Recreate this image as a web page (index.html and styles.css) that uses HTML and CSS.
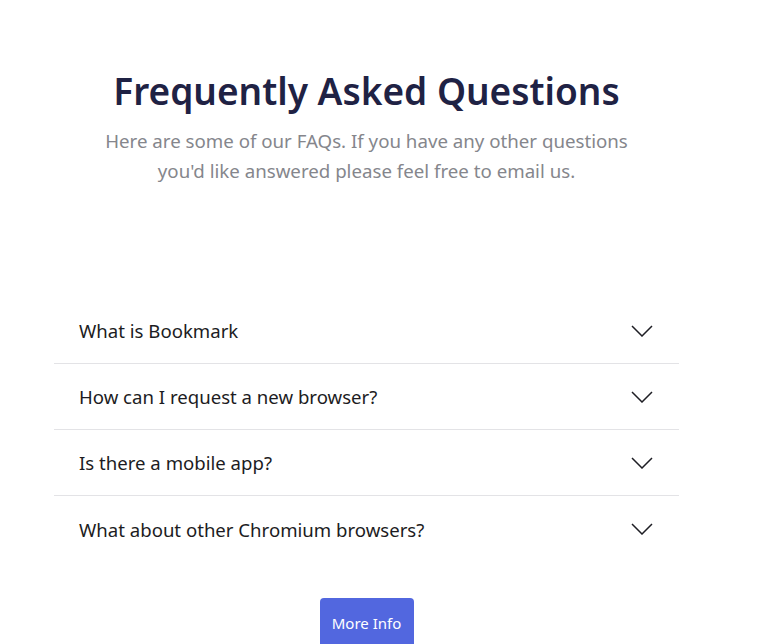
FILE: index.html
```html
<!DOCTYPE html>
<html lang="en">
<head>
<meta charset="utf-8">
<title>FAQ</title>
<link rel="stylesheet" href="styles.css">
</head>
<body>
<main class="faq">
  <header class="faq-header">
    <h1 class="faq-title">Frequently Asked Questions</h1>
    <p class="faq-sub">Here are some of our FAQs. If you have any other questions you'd like answered please feel free to email us.</p>
  </header>
  <ul class="faq-list">
    <li class="faq-item"><span>What is Bookmark</span><svg class="chev" width="22" height="12" viewBox="0 0 22 12"><path d="M1 1l10 10L21 1" fill="none" stroke="#1e1e24" stroke-width="1.5"/></svg></li>
    <li class="faq-item"><span>How can I request a new browser?</span><svg class="chev" width="22" height="12" viewBox="0 0 22 12"><path d="M1 1l10 10L21 1" fill="none" stroke="#1e1e24" stroke-width="1.5"/></svg></li>
    <li class="faq-item"><span>Is there a mobile app?</span><svg class="chev" width="22" height="12" viewBox="0 0 22 12"><path d="M1 1l10 10L21 1" fill="none" stroke="#1e1e24" stroke-width="1.5"/></svg></li>
    <li class="faq-item"><span>What about other Chromium browsers?</span><svg class="chev" width="22" height="12" viewBox="0 0 22 12"><path d="M1 1l10 10L21 1" fill="none" stroke="#1e1e24" stroke-width="1.5"/></svg></li>
  </ul>
  <div class="faq-actions">
    <button class="btn">More Info</button>
  </div>
</main>
</body>
</html>
```
FILE: styles.css
```css
* { box-sizing: border-box; }
body {
  margin: 0;
  background: #fff;
  font-family: "Noto Sans", "Open Sans", sans-serif;
  color: #242a45;
}
.faq {
  width: 625px;
  margin-left: 54px;
  padding-top: 66px;
}
.faq-header {
  display: flex;
  flex-direction: column;
  align-items: center;
  text-align: center;
}
.faq-title {
  margin: 0;
  font-size: 37px;
  line-height: 50px;
  font-weight: 600;
  color: #1f2244;
}
.faq-sub {
  margin: 10px 0 0;
  width: 540px;
  font-size: 18.7px;
  line-height: 30px;
  color: #85868c;
}
.faq-list {
  list-style: none;
  margin: 112px 0 0;
  padding: 0;
}
.faq-item {
  display: flex;
  align-items: center;
  justify-content: space-between;
  height: 66px;
  padding: 0 26px 0 25px;
  font-size: 18.6px;
  color: #1c1c22;
  border-bottom: 1px solid #e3e3e6;
}
.faq-item:last-child { border-bottom: none; }
.chev { display: block; }
.faq-actions {
  display: flex;
  justify-content: center;
  margin-top: 36px;
}
.btn {
  width: 94px;
  height: 50px;
  border: none;
  border-radius: 4px;
  background: #5267df;
  color: #fff;
  font-family: inherit;
  font-size: 15px;
  padding: 0;
  display: flex;
  justify-content: center;
  align-items: flex-start;
  padding-top: 15px;
}
```
